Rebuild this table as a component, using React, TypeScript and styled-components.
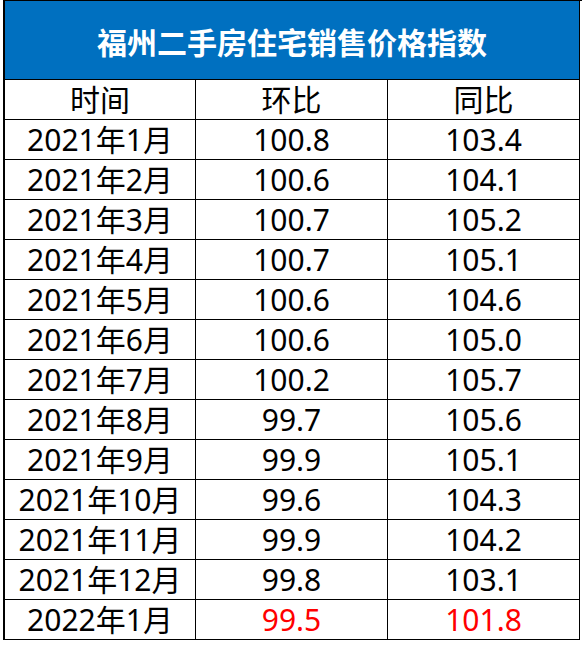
import styled, { createGlobalStyle } from 'styled-components'

const BLUE = '#0070c0'
const LINE = '#000'

const GlobalStyle = createGlobalStyle`
  html, body { margin: 0; padding: 0; background: #fff; }
  body { font-family: "Noto Sans", "Noto Sans CJK SC", sans-serif; }
`

const Sheet = styled.div`
  margin-left: 3px;
  width: 577px;
  display: grid;
  grid-template-columns: 191px 192px 192px;
  border-left: 2px solid ${LINE};
  border-top: 1px solid ${LINE};
`

const Title = styled.div`
  grid-column: 1 / -1;
  height: 79px;
  background: ${BLUE};
  color: #fff;
  border-right: 1px solid ${LINE};
  border-bottom: 1px solid ${LINE};
  display: flex;
  align-items: center;
  justify-content: center;
  font-family: "Noto Sans CJK SC", sans-serif;
  font-weight: 700;
  font-size: 30px;
  padding-top: 2px;
  box-sizing: border-box;
`

const Cell = styled.div<{ red?: boolean }>`
  height: 38px;
  padding-top: 1px;
  border-right: 1px solid ${LINE};
  border-bottom: 1px solid ${LINE};
  display: flex;
  align-items: center;
  justify-content: center;
  font-size: 30px;
  line-height: 1;
  color: ${p => (p.red ? '#ff0000' : '#000')};
`

const rows: [string, string, string][] = [
  ['2021年1月', '100.8', '103.4'],
  ['2021年2月', '100.6', '104.1'],
  ['2021年3月', '100.7', '105.2'],
  ['2021年4月', '100.7', '105.1'],
  ['2021年5月', '100.6', '104.6'],
  ['2021年6月', '100.6', '105.0'],
  ['2021年7月', '100.2', '105.7'],
  ['2021年8月', '99.7', '105.6'],
  ['2021年9月', '99.9', '105.1'],
  ['2021年10月', '99.6', '104.3'],
  ['2021年11月', '99.9', '104.2'],
  ['2021年12月', '99.8', '103.1'],
  ['2022年1月', '99.5', '101.8'],
]

export default function App() {
  return (
    <>
      <GlobalStyle />
      <Sheet>
        <Title>福州二手房住宅销售价格指数</Title>
        <Cell>时间</Cell>
        <Cell>环比</Cell>
        <Cell>同比</Cell>
        {rows.map((r, i) => {
          const last = i === rows.length - 1
          return [
            <Cell key={i + 'a'}>{r[0]}</Cell>,
            <Cell key={i + 'b'} red={last}>{r[1]}</Cell>,
            <Cell key={i + 'c'} red={last}>{r[2]}</Cell>,
          ]
        })}
      </Sheet>
    </>
  )
}
